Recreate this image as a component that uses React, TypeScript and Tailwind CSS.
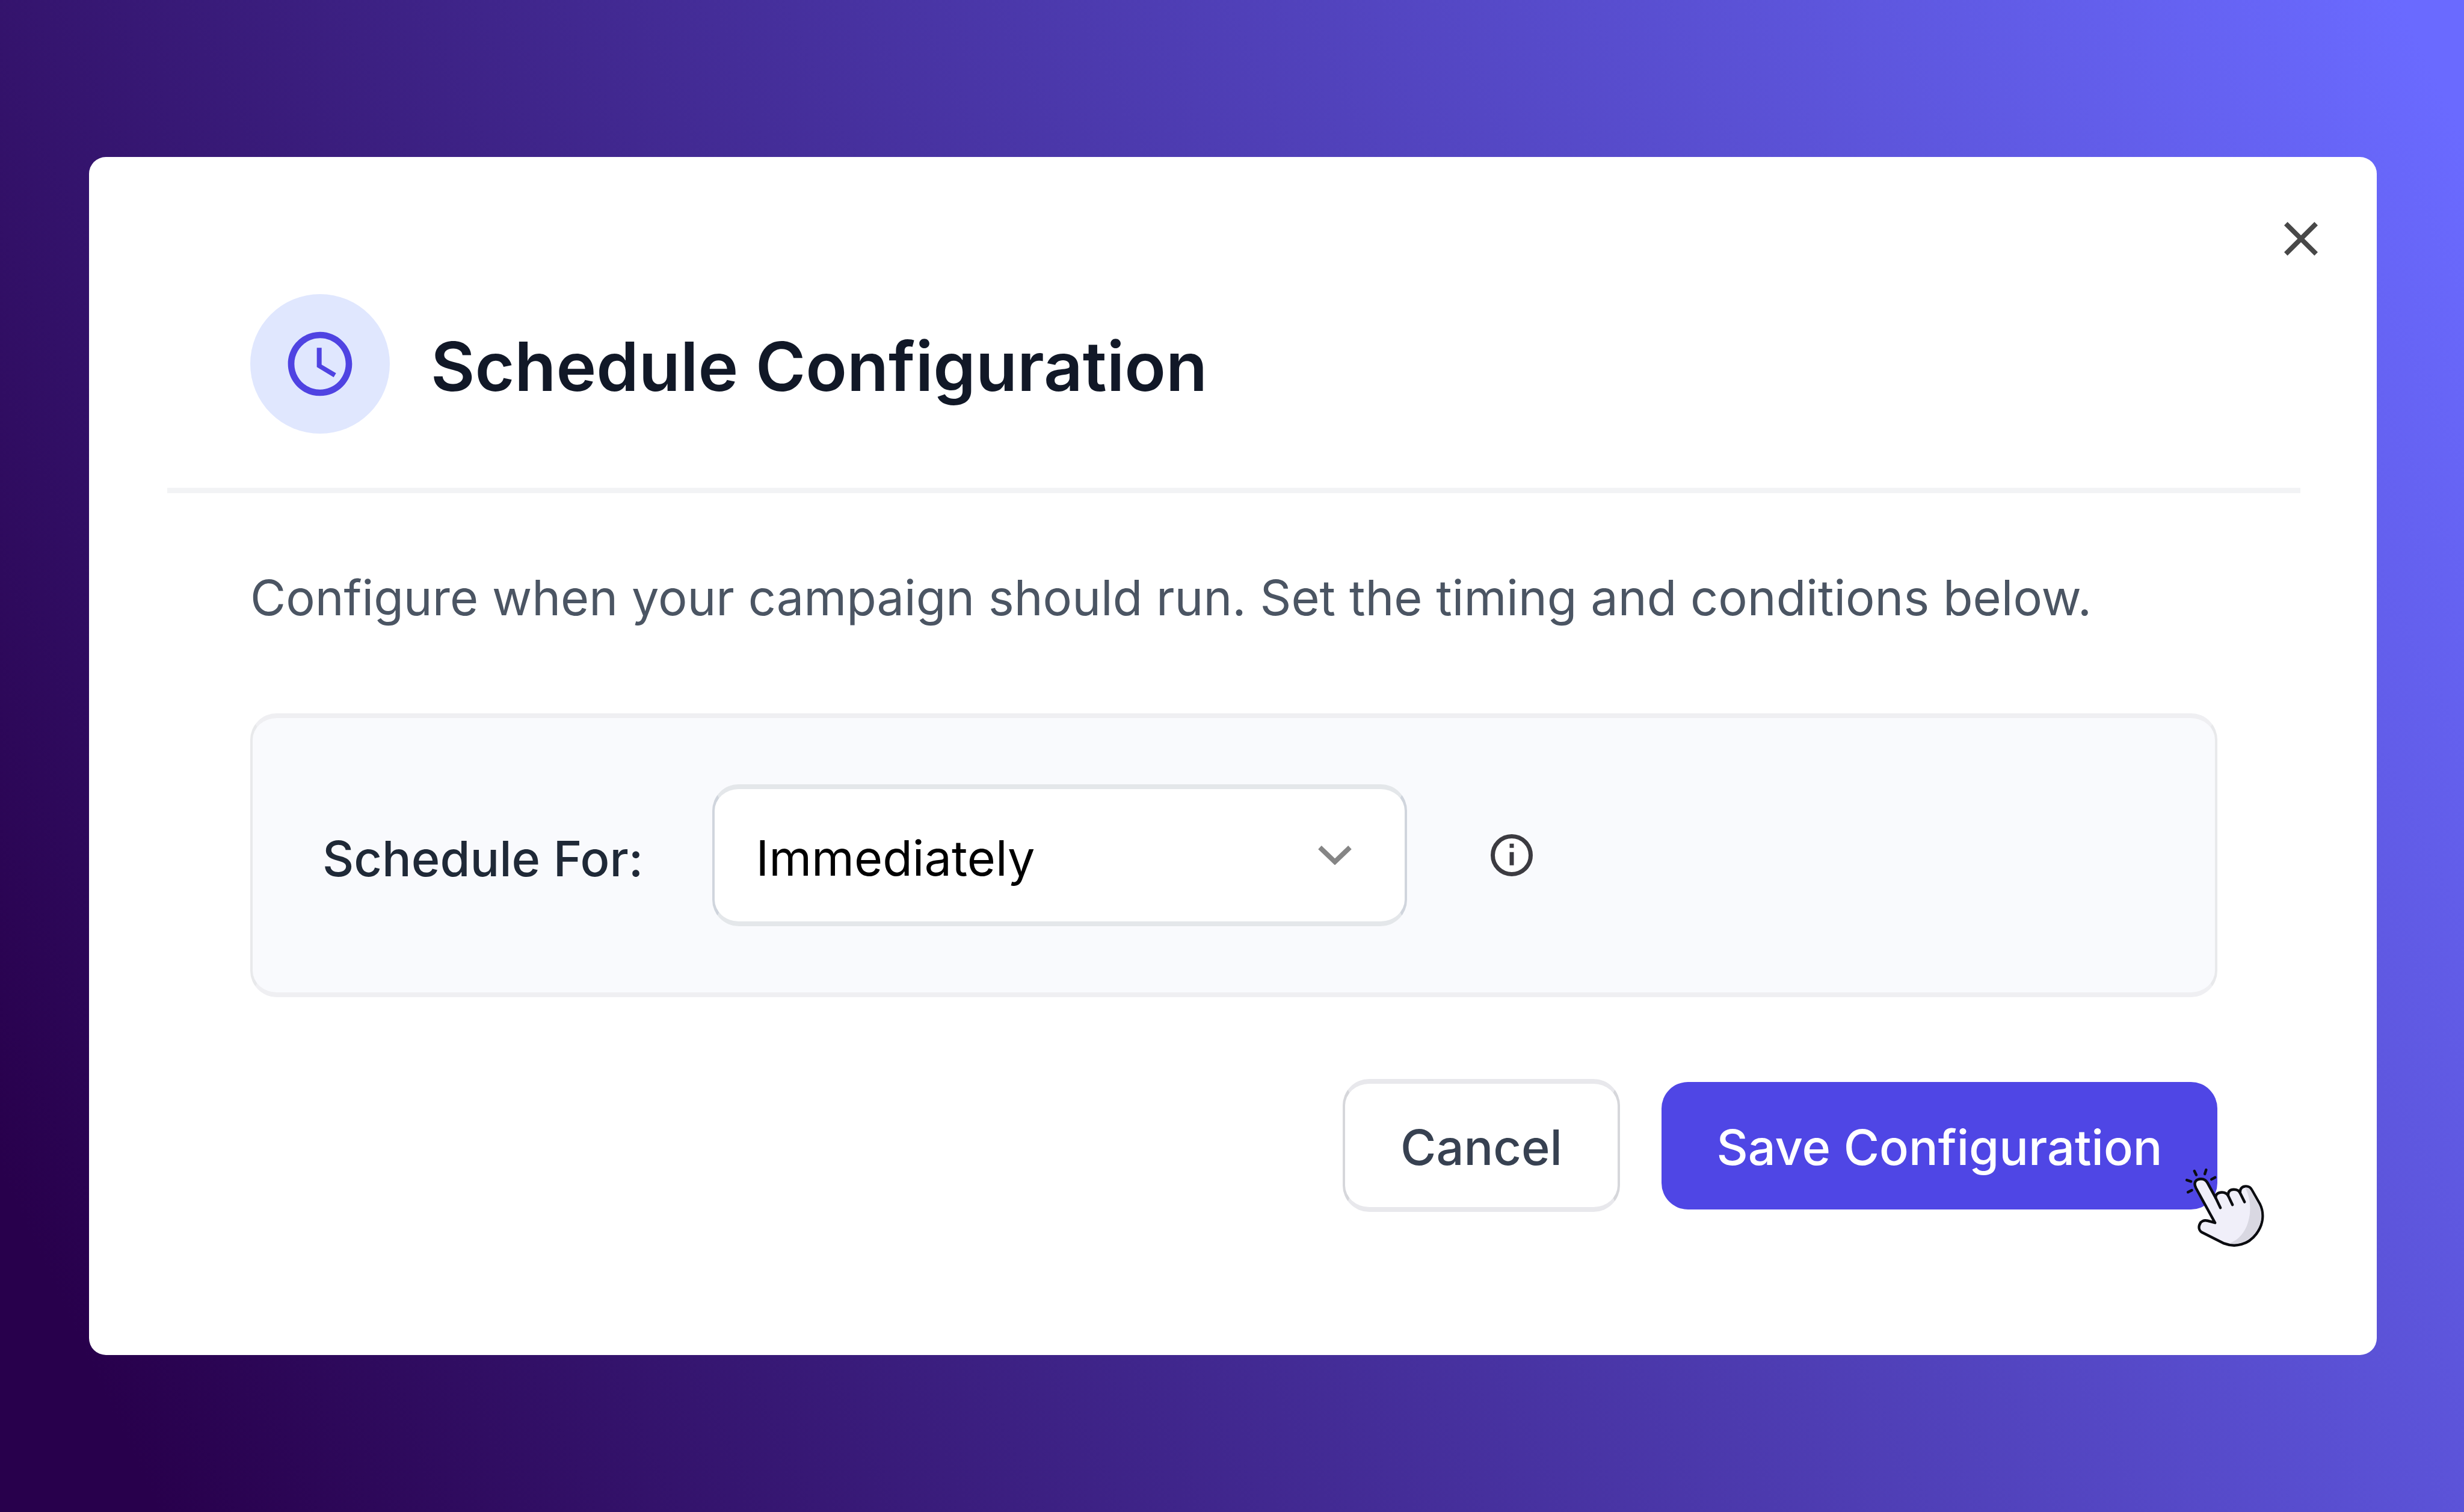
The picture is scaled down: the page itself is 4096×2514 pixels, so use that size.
import { MdClose, MdSchedule } from "react-icons/md";

function InfoIcon() {
  return (
    <svg viewBox="0 0 24 24" aria-hidden="true" className="size-[84px]" fill="currentColor">
      <circle cx="12" cy="12" r="9" fill="#ffffff" stroke="currentColor" strokeWidth="2" />
      <path d="M11 6.5h2v2h-2z M11 10.5h2v6.3h-2z" />
    </svg>
  );
}

function PointingHand() {
  return (
    <svg
      viewBox="0 0 840 840"
      aria-hidden="true"
      className="pointer-events-none absolute -right-[120px] -bottom-[97px] size-[208px]"
      fill="none"
      stroke="#0b0c10"
      strokeWidth="18"
      strokeLinecap="round"
      strokeLinejoin="round"
    >
      <path
        fill="#f0eff9"
        d="M340 538 L212 305 C190 262 217 243 246 243 C266 243 280 252 289 269 L344 370 C342 345 362 333 386 333 C406 333 420 341 428 356 C426 328 440 314 466 314 C486 314 500 321 508 337 C506 308 522 293 547 293 C565 293 578 300 587 317 L640 410 C672 475 664 550 616 613 C562 684 478 706 400 676 L254 603 C234 592 228 570 236 550 C244 526 266 518 290 524 Z"
      />
      <path
        fill="#d9d8e2"
        stroke="none"
        d="M541 301 C563 300 573 308 580 321 L633 414 C664 475 656 546 609 607 C567 662 503 687 437 674 C510 650 560 580 573 480 C580 410 568 350 541 301 Z"
      />
      <path d="M344 370 L376 437 M428 356 L457 417 M508 337 L538 398" />
      <path d="M201 190 L214 216 M280 182 L271 210 M340 233 L316 246 M150 251 L178 260 M158 332 L184 319" />
    </svg>
  );
}

export default function App() {
  return (
    <main className="flex min-h-screen flex-col justify-center bg-[linear-gradient(65deg,#28004c_5%,#6a6aff_98%)] pr-[145px] pl-[148px] font-[Inter,sans-serif]">
      <section
        role="dialog"
        aria-labelledby="dialog-title"
        className="relative rounded-[28px] bg-white pt-[228px] pr-[127px] pb-[238px] pl-[130px]"
      >
        <button
          type="button"
          aria-label="Close"
          className="absolute top-[88px] right-[78px] text-[#484848]"
        >
          <MdClose className="size-[96px]" />
        </button>

        <header className="flex items-center gap-[68px] border-b-9 border-[#f2f3f5] px-[138px] pb-[90px]">
          <div className="flex size-[232px] shrink-0 items-center justify-center rounded-full bg-[#e0e7fe]">
            <MdSchedule className="size-[128px] text-[#4f43e2]" />
          </div>
          <h1 id="dialog-title" className="pt-2 text-[113px] leading-[140px] font-semibold text-[#111827]">
            Schedule Configuration
          </h1>
        </header>

        <div className="px-[138px]">
          <p className="pt-[114px] text-[81px] leading-[120px] text-[#4b5563]">
            Configure when your campaign should run. Set the timing and conditions below.
          </p>

          <div className="mt-[132px] flex h-[472px] items-center rounded-[44px] border-x-4 border-y-8 border-x-[#e8e9eb] border-y-[#efeff2] bg-[#f9fafd] px-[116px]">
            <label htmlFor="schedule" className="pt-3 text-[81px] leading-[120px] font-medium text-[#1f2937]">
              Schedule For:
            </label>
            <div className="relative ml-[115px] w-[1155px]">
              <select
                id="schedule"
                className="h-[236px] w-full appearance-none rounded-[44px] border-x-4 border-y-8 border-x-[#d0d5dd] border-y-[#e4e7ea] bg-white pt-3 pl-[68px] text-[81px] text-black"
              >
                <option>Immediately</option>
              </select>
              <svg
                viewBox="0 0 56 32"
                aria-hidden="true"
                className="pointer-events-none absolute top-[102px] right-[92px] h-[32px] w-[56px]"
                fill="none"
                stroke="#858585"
                strokeWidth="8"
              >
                <path d="M3 3 L28 27 L53 3" />
              </svg>
            </div>
            <button type="button" aria-label="More information" className="ml-[132px] text-[#3c3b41]">
              <InfoIcon />
            </button>
          </div>

          <div className="mt-[136px] flex items-center justify-end gap-[69px]">
            <button
              type="button"
              className="h-[221px] w-[461px] rounded-[44px] border-x-4 border-y-8 border-x-[#d6d7db] border-y-[#e8e8ec] bg-white pt-2 text-[81px] font-medium text-[#374151]"
            >
              Cancel
            </button>
            <div className="relative">
              <button
                type="button"
                className="h-[212px] w-[924px] rounded-[44px] bg-[#4f46e5] pt-2 text-[81px] font-medium text-white"
              >
                Save Configuration
              </button>
              <PointingHand />
            </div>
          </div>
        </div>
      </section>
    </main>
  );
}
